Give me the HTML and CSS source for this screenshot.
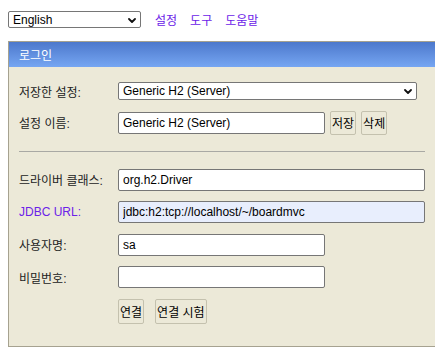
FILE: index.html
```html
<!DOCTYPE html>
<html lang="ko">
<head>
<meta charset="utf-8">
<title>H2 Console</title>
<link rel="stylesheet" href="styles.css">
</head>
<body>
<div class="toolbar">
  <span class="select-wrap">
    <select class="lang"><option>English</option></select>
    <svg class="chev" width="8" height="5" viewBox="0 0 8 5"><path d="M1 1 L4 4 L7 1" fill="none" stroke="#111" stroke-width="1.8" stroke-linecap="round" stroke-linejoin="round"/></svg>
  </span>
  <nav class="nav-links">
    <a href="#">설정</a>
    <a href="#">도구</a>
    <a href="#">도움말</a>
  </nav>
</div>
<div class="panel">
  <div class="panel-head">로그인</div>
  <div class="panel-body">
    <div class="form">
      <label class="lbl">저장한 설정:</label>
      <span class="select-wrap">
        <select class="wide-select"><option>Generic H2 (Server)</option></select>
        <svg class="chev" width="8" height="5" viewBox="0 0 8 5"><path d="M1 1 L4 4 L7 1" fill="none" stroke="#111" stroke-width="1.8" stroke-linecap="round" stroke-linejoin="round"/></svg>
      </span>

      <label class="lbl">설정 이름:</label>
      <div class="inline">
        <input class="field short" value="Generic H2 (Server)">
        <button class="btn">저장</button>
        <button class="btn">삭제</button>
      </div>

      <hr class="sep">

      <label class="lbl">드라이버 클래스:</label>
      <input class="field wide" value="org.h2.Driver">

      <a class="lbl link" href="#">JDBC URL:</a>
      <input class="field wide url" value="jdbc:h2:tcp://localhost/~/boardmvc">

      <label class="lbl">사용자명:</label>
      <input class="field short" value="sa">

      <label class="lbl">비밀번호:</label>
      <input class="field short" type="password" value="">

      <span></span>
      <div class="actions">
        <button class="btn tall">연결</button>
        <button class="btn tall">연결 시험</button>
      </div>
    </div>
  </div>
</div>
</body>
</html>
```
FILE: styles.css
```css
body {
  margin: 8px;
  font: 12px "Liberation Sans", Arial, "Noto Sans CJK KR", sans-serif;
  color: #000;
  background: #fff;
}

.toolbar {
  display: flex;
  align-items: center;
  gap: 14px;
  padding-top: 3px;
  height: 17px;
}

.select-wrap {
  position: relative;
  display: inline-flex;
  width: max-content;
}

.chev {
  position: absolute;
  right: 5px;
  top: 50%;
  margin-top: -2px;
  pointer-events: none;
}

.lang,
.wide-select {
  -webkit-appearance: none;
  appearance: none;
  font: 12px "Liberation Sans", Arial, sans-serif;
  color: #000;
  border: 1px solid #767676;
  border-radius: 2px;
  background: #fff;
  padding: 0 4px;
  margin: 0;
  box-sizing: border-box;
}

.lang {
  width: 133px;
  height: 17px;
}

.wide-select {
  width: 299px;
  height: 18px;
}

.nav-links {
  display: flex;
  gap: 13px;
}

a {
  color: #6b22e8;
  text-decoration: none;
}

.panel {
  margin-top: 13px;
  width: 429px;
  box-sizing: border-box;
  border: 1px solid #a6a290;
  background: #ece9d8;
}

.panel-head {
  height: 25px;
  background: linear-gradient(#4c78cc, #76a6f2);
  color: #fff;
  padding-left: 10px;
  display: flex;
  align-items: center;
}

.panel-body {
  padding: 15px 11px 22px 10px;
}

.form {
  display: grid;
  grid-template-columns: 99px 1fr;
  row-gap: 10.5px;
  align-items: center;
}

.lbl {
  color: #222;
}

.lbl.link {
  color: #6b22e8;
}

.inline {
  display: flex;
  align-items: center;
}

.field {
  height: 22px;
  box-sizing: border-box;
  border: 1px solid #767676;
  border-radius: 2px;
  padding: 0 4px;
  margin: 0;
  font: 12px "Liberation Sans", Arial, sans-serif;
  background: #fff;
  color: #000;
}

.field.short {
  width: 207px;
}

.field.wide {
  width: 307px;
}

.field.url {
  background: #e8eefd;
}

.sep {
  grid-column: 1 / -1;
  margin: 6px 0 6px;
  border: 0;
  border-top: 1px solid #a9a9a4;
  height: 0;
}

.btn {
  height: 24px;
  margin: 0 0 0 5px;
  padding: 0 1px;
  font: 12px "Liberation Sans", Arial, "Noto Sans CJK KR", sans-serif;
  background: #ece9d8;
  border: 1px solid #c4c1ae;
  border-radius: 2px;
  color: #000;
}

.actions {
  display: flex;
  gap: 11px;
}

.btn.tall {
  height: 25px;
  margin-left: 0;
}
```
